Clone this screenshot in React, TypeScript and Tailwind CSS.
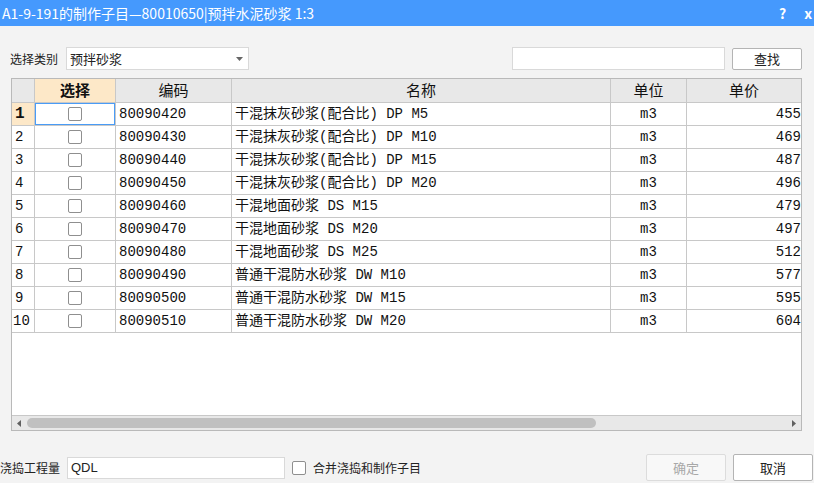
const ROWS = [
  { code: '80090420', name: '干混抹灰砂浆(配合比) DP M5', unit: 'm3', price: '455' },
  { code: '80090430', name: '干混抹灰砂浆(配合比) DP M10', unit: 'm3', price: '469' },
  { code: '80090440', name: '干混抹灰砂浆(配合比) DP M15', unit: 'm3', price: '487' },
  { code: '80090450', name: '干混抹灰砂浆(配合比) DP M20', unit: 'm3', price: '496' },
  { code: '80090460', name: '干混地面砂浆 DS M15', unit: 'm3', price: '479' },
  { code: '80090470', name: '干混地面砂浆 DS M20', unit: 'm3', price: '497' },
  { code: '80090480', name: '干混地面砂浆 DS M25', unit: 'm3', price: '512' },
  { code: '80090490', name: '普通干混防水砂浆 DW M10', unit: 'm3', price: '577' },
  { code: '80090500', name: '普通干混防水砂浆 DW M15', unit: 'm3', price: '595' },
  { code: '80090510', name: '普通干混防水砂浆 DW M20', unit: 'm3', price: '604' },
];

const cell = 'h-full border-r border-[#c8c8c8] flex items-center overflow-hidden whitespace-nowrap';

export default function App() {
  return (
    <div className="w-[814px] h-[483px] bg-[#f3f3f3] flex flex-col overflow-hidden font-['Noto_Sans_CJK_SC','Liberation_Sans',sans-serif] text-[#222]">
      {/* Title bar */}
      <div className="h-[26px] bg-[#4599fd] text-white flex items-center pl-[2px] pr-[2px]">
        <span className="text-[14px] leading-none flex-1">A1-9-191的制作子目—80010650|预拌水泥砂浆 1:3</span>
        <span className="text-[14px] font-bold leading-none mr-[18px]">?</span>
        <span className="text-[14px] font-bold leading-none">x</span>
      </div>

      {/* Filter row */}
      <div className="mt-[21px] h-[23px] flex items-center">
        <span className="ml-[10px] w-[56px] text-[12px]">选择类别</span>
        <div className="w-[183px] h-[23px] bg-white border border-[#d9d9d9] flex items-center pl-[3px] pr-[5px]">
          <span className="flex-1 text-[13px]">预拌砂浆</span>
          <svg width="7" height="4" viewBox="0 0 7 4"><path d="M0 0h7L3.5 4z" fill="#666" /></svg>
        </div>
        <div className="ml-auto w-[213px] h-[23px] bg-white border border-[#d9d9d9]" />
        <button className="ml-[7px] mr-[12px] w-[70px] h-[22px] bg-white border border-[#b4b4b4] rounded-[2px] text-[13px] flex items-center justify-center">查找</button>
      </div>

      {/* Grid */}
      <div className="mt-[8px] ml-[11px] w-[791px] h-[353px] bg-white border border-[#b9b9b9] flex flex-col font-['Liberation_Mono','Noto_Sans_CJK_SC',monospace] text-[14px] text-[#111]">
        <div className="h-[24px] flex border-b border-[#c8c8c8] bg-[#e8e8e8] text-[15px] font-['Noto_Sans_CJK_SC',sans-serif]">
          <div className={`${cell} w-[23px]`} />
          <div className={`${cell} w-[81px] justify-center bg-[#fde8c8] font-bold`}>选择</div>
          <div className={`${cell} w-[116px] justify-center`}>编码</div>
          <div className={`${cell} w-[379px] justify-center`}>名称</div>
          <div className={`${cell} w-[76px] justify-center`}>单位</div>
          <div className="h-full w-[114px] flex items-center justify-center">单价</div>
        </div>
        {ROWS.map((r, i) => (
          <div key={r.code} className="h-[23px] flex border-b border-[#c8c8c8] shrink-0">
            <div className={`${cell} w-[23px] ${i === 0 ? 'bg-[#fde8c8] font-bold text-[16px] pl-[3px]' : i === 9 ? 'pl-px' : 'pl-[3px]'}`}>{i + 1}</div>
            <div className={`${cell} w-[81px] justify-center relative`}>
              <div className="w-[14px] h-[14px] border border-[#8f8f8f] rounded-[2px] bg-white" />
              {i === 0 && <div className="absolute -top-px -left-px -bottom-px right-[-1px] border-2 border-[#4a9cf6]" />}
            </div>
            <div className={`${cell} w-[116px] pl-[3px]`}>{r.code}</div>
            <div className={`${cell} w-[379px] pl-[3px]`}>{r.name}</div>
            <div className={`${cell} w-[76px] justify-center`}>{r.unit}</div>
            <div className="h-full w-[114px] flex items-center justify-end">{r.price}</div>
          </div>
        ))}
        <div className="flex-1" />
        <div className="h-[15px] border-t border-[#c8c8c8] bg-[#e8e8e8] flex items-center px-[5px]">
          <svg width="4" height="7" viewBox="0 0 4 7"><path d="M4 0v7L0 3.5z" fill="#606060" /></svg>
          <div className="ml-[6px] w-[569px] h-[10px] rounded-full bg-[#c0c0c0]" />
          <div className="flex-1" />
          <svg width="4" height="7" viewBox="0 0 4 7"><path d="M0 0v7L4 3.5z" fill="#606060" /></svg>
        </div>
      </div>

      {/* Bottom row */}
      <div className="mt-[23px] h-[27px] flex items-center">
        <span className="w-[67px] text-[12px]">浇捣工程量</span>
        <div className="w-[218px] h-[22px] bg-white border border-[#d9d9d9] flex items-center pl-[3px] text-[13px] font-['Liberation_Sans',sans-serif]">QDL</div>
        <div className="ml-[7px] w-[14px] h-[14px] border border-[#8f8f8f] rounded-[2px] bg-white" />
        <span className="ml-[7px] text-[12px]">合并浇捣和制作子目</span>
        <button disabled className="ml-auto w-[80px] h-[27px] bg-[#f8f8f8] border border-[#dcdcdc] rounded-[2px] text-[13px] text-[#a8a8a8]">确定</button>
        <button className="ml-[7px] mr-px w-[80px] h-[27px] bg-white border border-[#b4b4b4] rounded-[2px] text-[13px]">取消</button>
      </div>
    </div>
  );
}
